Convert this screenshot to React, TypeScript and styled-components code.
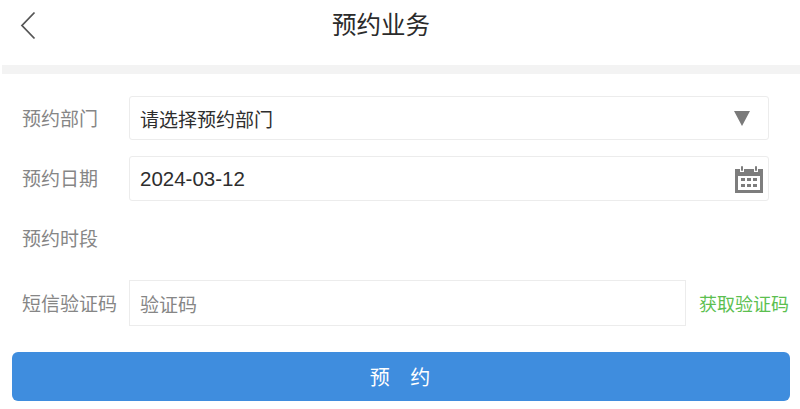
import styled, { createGlobalStyle } from 'styled-components';

const GlobalStyle = createGlobalStyle`
  html, body {
    margin: 0;
    padding: 0;
    background: #fff;
  }
  body {
    font-family: "Liberation Sans", "Noto Sans CJK SC", sans-serif;
  }
`;

const App = () => {
  return (
    <StPage>
      <GlobalStyle />
      <StHeader>
        <StBack aria-label="返回">
          <svg width="16" height="30" viewBox="0 0 16 30" fill="none">
            <path d="M14.5 1.5 2 14.5 14.5 27.5" stroke="#555" strokeWidth="1.8" />
          </svg>
        </StBack>
        <StTitle>预约业务</StTitle>
      </StHeader>
      <StDivider />
      <StForm>
        <StRow $height={44} $mb={16}>
          <StLabel>预约部门</StLabel>
          <StField $pr={18}>
            <StValue $size={19}>请选择预约部门</StValue>
            <svg width="16" height="15" viewBox="0 0 16 15">
              <path d="M0 0H16L8 15Z" fill="#7a7a7a" />
            </svg>
          </StField>
        </StRow>
        <StRow $height={45} $mb={15}>
          <StLabel>预约日期</StLabel>
          <StField $pr={4}>
            <StValue $size={20.5}>2024-03-12</StValue>
            <svg width="30" height="30" viewBox="0 0 30 30">
              <path
                d="M1 5H6V8H10V5H20V8H24V5H29V29H1ZM4 12V26H26V12Z"
                fill="#7d7d7d"
                fillRule="evenodd"
              />
              <rect x="7" y="2" width="2" height="5" rx="1" fill="#7d7d7d" />
              <rect x="21" y="2" width="2" height="5" rx="1" fill="#7d7d7d" />
              <g fill="#7d7d7d">
                <rect x="7" y="14" width="4" height="3" />
                <rect x="13" y="14" width="4" height="3" />
                <rect x="19" y="14" width="4" height="3" />
                <rect x="7" y="20" width="4" height="3" />
                <rect x="13" y="20" width="4" height="3" />
                <rect x="19" y="20" width="4" height="3" />
              </g>
            </svg>
          </StField>
        </StRow>
        <StRow $height={45} $mb={19}>
          <StLabel>预约时段</StLabel>
        </StRow>
        <StRow $height={46} $mb={26}>
          <StLabel>短信验证码</StLabel>
          <StCodeField>
            <StPlaceholder>验证码</StPlaceholder>
          </StCodeField>
          <StGetCode>获取验证码</StGetCode>
        </StRow>
        <StSubmit>预 约</StSubmit>
      </StForm>
    </StPage>
  );
};

export default App;

const StPage = styled.div`
  display: flex;
  flex-direction: column;

  width: 800px;
  height: 409px;
  overflow: hidden;

  background: #fff;
`;
const StHeader = styled.header`
  position: relative;

  display: flex;
  justify-content: center;
  align-items: center;

  height: 65px;
  padding-right: 38px;
  padding-bottom: 13px;
  box-sizing: border-box;
`;
const StBack = styled.div`
  position: absolute;
  top: 11px;
  left: 20px;

  display: flex;
`;
const StTitle = styled.h1`
  margin: 0;

  color: #2b2b2b;
  font-size: 24.5px;
  font-weight: 400;
  line-height: 30px;
`;
const StDivider = styled.div`
  height: 9px;
  margin-left: 2px;

  background: #f3f3f3;
`;
const StForm = styled.main`
  display: flex;
  flex-direction: column;

  padding: 22px 10px 0 12px;
`;
const StRow = styled.div<{ $height: number; $mb: number }>`
  display: flex;
  align-items: center;

  height: ${({ $height }) => $height}px;
  margin-bottom: ${({ $mb }) => $mb}px;
  padding-left: 10px;
`;
const StLabel = styled.span`
  flex: 0 0 107px;
  margin-top: -2px;

  color: #868686;
  font-size: 19px;
  white-space: nowrap;
`;
const StField = styled.div<{ $pr: number }>`
  display: flex;
  justify-content: space-between;
  align-items: center;

  width: 640px;
  height: 100%;
  padding: 0 ${({ $pr }) => $pr}px 0 10px;
  box-sizing: border-box;

  border: 1px solid #ececec;
  border-radius: 3px;
`;
const StValue = styled.span<{ $size: number }>`
  color: #2e2e2e;
  font-size: ${({ $size }) => $size}px;
`;
const StCodeField = styled.div`
  display: flex;
  align-items: center;

  width: 557px;
  height: 100%;
  padding-left: 10px;
  box-sizing: border-box;

  border: 1px solid #ececec;
`;
const StPlaceholder = styled.span`
  color: #868686;
  font-size: 19px;
`;
const StGetCode = styled.span`
  margin-left: 13px;

  color: #5cbf50;
  font-size: 18px;
  white-space: nowrap;
`;
const StSubmit = styled.button`
  width: 778px;
  height: 49px;
  padding: 0 2px 0 0;

  border: none;
  border-radius: 6px;
  background: #3f8dde;
  color: #fff;
  font-family: inherit;
  font-size: 20px;
  white-space: pre;
  word-spacing: 15px;
`;
